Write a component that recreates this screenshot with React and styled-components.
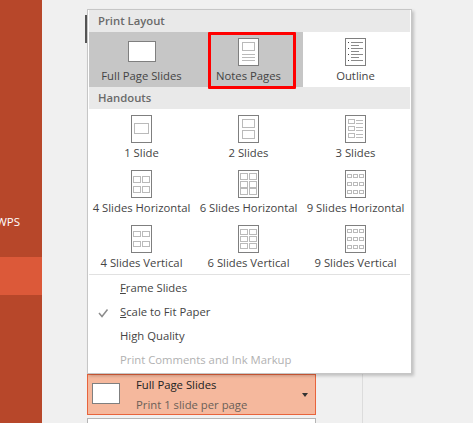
import styled, { createGlobalStyle } from "styled-components";

const GlobalStyles = createGlobalStyle`
* { padding: 0; margin: 0; box-sizing: border-box; }
html, body { width: 473px; height: 423px; overflow: hidden; }
body { background: #f0f0f0; font-family: "Open Sans", "Liberation Sans", sans-serif; }
`;

const handouts = [
  { label: "1 Slide", kind: "one" },
  { label: "2 Slides", kind: "two" },
  { label: "3 Slides", kind: "three" },
  { label: "4 Slides Horizontal", kind: "grid", cols: 2, ys: [6, 16], boxH: 6 },
  { label: "6 Slides Horizontal", kind: "grid", cols: 2, ys: [3, 11, 18], boxH: 6 },
  { label: "9 Slides Horizontal", kind: "grid", cols: 3, ys: [4, 12, 20], boxH: 3 },
  { label: "4 Slides Vertical", kind: "grid", cols: 2, ys: [6, 16], boxH: 5 },
  { label: "6 Slides Vertical", kind: "grid", cols: 2, ys: [4, 11, 18], boxH: 5 },
  { label: "9 Slides Vertical", kind: "grid", cols: 3, ys: [4, 12, 20], boxH: 3 },
];

function Thumb({ kind, cols, ys, boxH }) {
  const boxes = [];
  const lines = [];
  if (kind === "one") boxes.push([3, 8, 14, 10]);
  if (kind === "two") {
    boxes.push([4, 4, 12, 8]);
    boxes.push([4, 15, 12, 8]);
  }
  if (kind === "three") {
    [4, 11, 18].forEach((y) => {
      boxes.push([3, y, 6, 4]);
      lines.push([11, y + 1, 18, y + 1]);
      lines.push([11, y + 4, 18, y + 4]);
    });
  }
  if (kind === "notes") {
    boxes.push([4, 4, 12, 8]);
    [16, 19, 22].forEach((y) => lines.push([4, y, 17, y]));
  }
  if (kind === "grid") {
    const w = cols === 3 ? 4 : 7;
    const stepX = cols === 3 ? 6 : 9;
    ys.forEach((y) => {
      for (let c = 0; c < cols; c++) boxes.push([2 + c * stepX, y, w, boxH]);
    });
  }
  if (kind === "outline") {
    [4, 7, 10, 13, 16, 19, 22].forEach((y, i) => {
      lines.push([6, y, i % 2 ? 14 : 18, y]);
    });
  }
  return (
    <svg width="21" height="28" viewBox="0 0 21 28">
      <rect x="0.5" y="0.5" width="20" height="27" fill="#fff" stroke="#7f7f7f" />
      {kind === "outline" &&
        [4, 10, 16, 22].map((y) => (
          <rect key={y} x="3" y={y} width="1" height="1" fill="#444" />
        ))}
      {boxes.map((b, i) => (
        <rect
          key={i}
          x={b[0] + 0.5}
          y={b[1] + 0.5}
          width={b[2]}
          height={b[3]}
          fill="none"
          stroke="#bababa"
        />
      ))}
      {lines.map((l, i) => (
        <line
          key={i}
          x1={l[0]}
          x2={l[2]}
          y1={l[1] + 0.5}
          y2={l[3] + 0.5}
          stroke={kind === "outline" ? "#8a8a8a" : "#bababa"}
        />
      ))}
    </svg>
  );
}

function App() {
  return (
    <>
      <GlobalStyles />
      <Page>
        <Sidebar>
          <SideLabel>WPS</SideLabel>
          <SideActive />
        </Sidebar>
        <Content>
          <ScrollMark />
          <Menu>
            <SectionHead>Print Layout</SectionHead>
            <LayoutRow>
              <LayoutItem $selected>
                <WideThumb />
                <ItemLabel>Full Page Slides</ItemLabel>
              </LayoutItem>
              <LayoutItem $selected>
                <Thumb kind="notes" />
                <ItemLabel>Notes Pages</ItemLabel>
              </LayoutItem>
              <LayoutItem>
                <Thumb kind="outline" />
                <ItemLabel>Outline</ItemLabel>
              </LayoutItem>
              <RedMark />
            </LayoutRow>
            <SectionHead>Handouts</SectionHead>
            <HandoutGrid>
              {handouts.map((item) => (
                <HandoutItem key={item.label}>
                  <Thumb {...item} />
                  <ItemLabel>{item.label}</ItemLabel>
                </HandoutItem>
              ))}
            </HandoutGrid>
            <Options>
              <Option>
                <u>F</u>rame Slides
              </Option>
              <Option>
                <CheckIcon width="11" height="10" viewBox="0 0 11 10">
                  <path d="M1 5l3 3.5L9.5 1.5" fill="none" stroke="#8c8c8c" strokeWidth="1.5" />
                </CheckIcon>
                <u>S</u>cale to Fit Paper
              </Option>
              <Option>High Quality</Option>
              <Option $disabled>Print Comments and Ink Markup</Option>
            </Options>
          </Menu>
          <Picker>
            <PickerThumb />
            <PickerText>
              <PickerTitle>Full Page Slides</PickerTitle>
              <PickerSub>Print 1 slide per page</PickerSub>
            </PickerText>
            <Caret />
          </Picker>
          <NextField />
          <Divider />
        </Content>
      </Page>
    </>
  );
}

export default App;

const Page = styled.div`
  display: flex;
  width: 473px;
  height: 423px;
`;

const Sidebar = styled.aside`
  position: relative;
  width: 42px;
  height: 100%;
  background: #b7472a;
`;

const SideLabel = styled.span`
  position: absolute;
  top: 214px;
  right: 22px;
  color: #fff;
  font-size: 11.5px;
  line-height: 16px;
`;

const SideActive = styled.div`
  position: absolute;
  top: 257px;
  left: 0;
  width: 100%;
  height: 38px;
  background: #dc5939;
`;

const Content = styled.main`
  position: relative;
  flex: 1;
`;

const ScrollMark = styled.div`
  position: absolute;
  top: 15px;
  left: 43px;
  width: 2px;
  height: 28px;
  background: #555;
`;

const Menu = styled.div`
  position: absolute;
  top: 9px;
  left: 45px;
  z-index: 2;
  width: 325px;
  height: 365px;
  padding: 0 1px;
  background: #fff;
  border: 1px solid #c6c6c6;
  box-shadow: 2px 2px 3px rgba(0, 0, 0, 0.2);
`;

const SectionHead = styled.div`
  height: 22px;
  padding-left: 9px;
  background: #e9e9e9;
  color: #6a6a6a;
  font-size: 11.3px;
  font-weight: 600;
  line-height: 21px;
`;

const LayoutRow = styled.div`
  position: relative;
  display: grid;
  grid-template-columns: repeat(3, 1fr);
  height: 55px;
`;

const LayoutItem = styled.div`
  display: flex;
  flex-direction: column;
  align-items: center;
  padding: 6px 2px 0 0;
  background: ${(p) => (p.$selected ? "#c6c6c6" : "#fff")};
`;

const RedMark = styled.div`
  position: absolute;
  top: 0;
  left: 119px;
  width: 88px;
  height: 57px;
  border: 3px solid #f00;
  border-radius: 1px;
`;

const WideThumb = styled.div`
  flex: none;
  width: 28px;
  height: 21px;
  margin: 3px 0 4px;
  background: #fff;
  border: 1px solid #7f7f7f;
`;

const ItemLabel = styled.span`
  margin-top: 2px;
  color: #444;
  font-size: 11.3px;
  line-height: 15px;
  white-space: nowrap;
`;

const HandoutGrid = styled.div`
  display: grid;
  grid-template-columns: repeat(3, 1fr);
  grid-auto-rows: 55px;
  padding-top: 6px;
`;

const HandoutItem = styled.div`
  display: flex;
  flex-direction: column;
  align-items: center;
  padding-right: 2px;
`;

const Options = styled.div`
  margin-top: -6px;
  padding-top: 1px;
  border-top: 1px solid #e1e1e1;
`;

const Option = styled.div`
  position: relative;
  height: 24px;
  padding-left: 31px;
  color: ${(p) => (p.$disabled ? "#b1b1b1" : "#444")};
  font-size: 11.3px;
  line-height: 24px;
`;

const CheckIcon = styled.svg`
  position: absolute;
  top: 8px;
  left: 9px;
`;

const Picker = styled.div`
  position: absolute;
  top: 374px;
  left: 45px;
  display: flex;
  align-items: center;
  width: 229px;
  height: 41px;
  padding: 0 4px;
  background: #f5b89d;
  border: 1px solid #e8643c;
`;

const PickerThumb = styled(WideThumb)`
  margin: 0 0 2px;
`;

const PickerText = styled.div`
  flex: 1;
  margin-left: 16px;
`;

const PickerTitle = styled.div`
  color: #222;
  font-size: 11.3px;
  line-height: 20px;
`;

const PickerSub = styled.div`
  color: #6b6058;
  font-size: 11.3px;
  line-height: 20px;
`;

const Caret = styled.div`
  width: 0;
  height: 0;
  margin-right: 3px;
  border-top: 4px solid #333;
  border-left: 3.5px solid transparent;
  border-right: 3.5px solid transparent;
`;

const NextField = styled.div`
  position: absolute;
  top: 418px;
  left: 45px;
  width: 229px;
  height: 20px;
  background: #fff;
  border: 1px solid #b5b5b5;
`;

const Divider = styled.div`
  position: absolute;
  top: 370px;
  left: 320px;
  width: 1px;
  height: 53px;
  background: #dcdcdc;
`;
